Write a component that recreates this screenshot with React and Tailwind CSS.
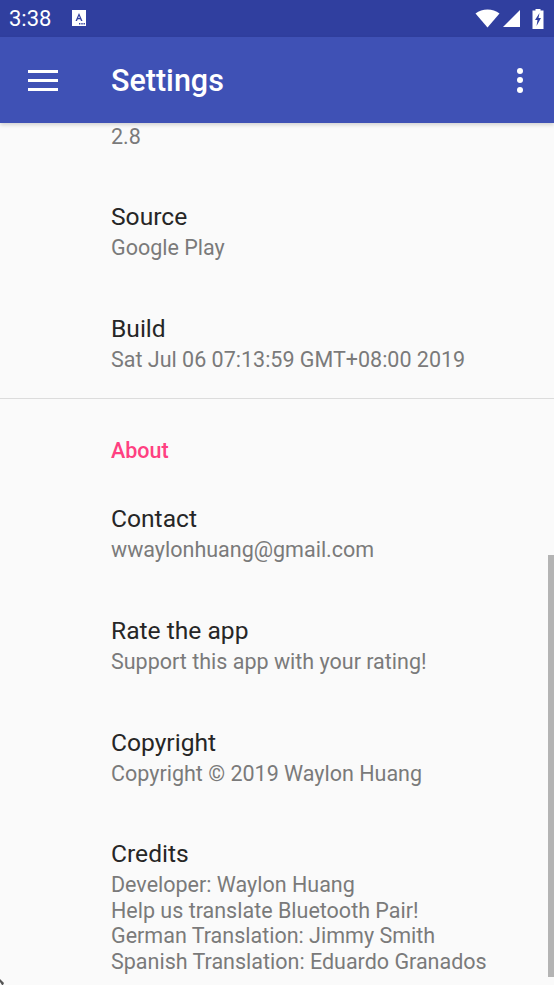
function Pref({ title, children, className = "" }) {
  return (
    <div className={"pl-[111px] " + className}>
      <div className="text-[24.6px] leading-[30px] text-[#262626]">{title}</div>
      <div className="mt-[3px] text-[21.5px] leading-[25.5px] text-[#7a7a7a] whitespace-pre-line">{children}</div>
    </div>
  )
}

export default function App() {
  return (
    <div className="relative w-[554px] h-[985px] overflow-hidden bg-[#fafafa] font-['Roboto',sans-serif]">
      {/* status bar */}
      <div className="h-[37px] bg-[#303f9f] flex items-center pl-[9px] pr-[10px] text-white">
        <span className="text-[22px] leading-none">3:38</span>
        <svg className="ml-[21px] mt-[-1px]" width="15" height="16" viewBox="0 0 15 16">
          <path d="M0 0H14V16H0Z" fill="#fff" />
          <path d="M7 3L10.5 11H9L8.3 9.3H5.7L5 11H3.5ZM7 5.8L6.2 8H7.8Z" fill="#303f9f" />
          <path d="M7 13h1.4v1.4H7zM9.3 13h1.4v1.4H9.3zM11.5 13h1.4v1.4h-1.4z" fill="#303f9f" />
        </svg>
        <div className="ml-auto flex items-center">
          <svg width="25" height="19" viewBox="0 0 25 19">
            <path d="M12.5 18.5L0.5 4.5C4 1.7 8 0.5 12.5 0.5C17 0.5 21 1.7 24.5 4.5Z" fill="#fff" />
          </svg>
          <svg className="ml-[3px]" width="17" height="17" viewBox="0 0 17 17">
            <path d="M17 0V17H0Z" fill="#fff" />
          </svg>
          <svg className="ml-[12px]" width="12" height="20" viewBox="0 0 12 20">
            <path d="M3.5 0H8.5V1.5H11.5V20H0.5V1.5H3.5Z" fill="#fff" />
            <path d="M7.5 4L3 11H5.5L4.5 17L9 9H6.5Z" fill="#303f9f" />
          </svg>
        </div>
      </div>

      {/* app bar */}
      <div className="relative z-10 h-[86px] bg-[#3f51b5] flex items-center shadow-[0_2px_4px_rgba(0,0,0,0.16)] text-white">
        <div className="w-[111px] pl-[28px]">
          <div className="w-[30px] flex flex-col gap-[6px]">
            <div className="h-[3px] bg-white" />
            <div className="h-[3px] bg-white" />
            <div className="h-[3px] bg-white" />
          </div>
        </div>
        <div className="text-[30.5px] font-medium leading-none mt-[2px]">Settings</div>
        <div className="ml-auto mr-[31px] flex flex-col gap-[3.5px]">
          <div className="w-[6px] h-[6px] rounded-full bg-white" />
          <div className="w-[6px] h-[6px] rounded-full bg-white" />
          <div className="w-[6px] h-[6px] rounded-full bg-white" />
        </div>
      </div>

      {/* list */}
      <div className="pl-[111px] pt-[1px] text-[21.5px] leading-[25.5px] text-[#7a7a7a]">2.8</div>
      <Pref title="Source" className="mt-[52.5px]">Google Play</Pref>
      <Pref title="Build" className="mt-[53px]">Sat Jul 06 07:13:59 GMT+08:00 2019</Pref>
      <div className="h-[1px] bg-[#dcdcdc] mt-[26px]" />
      <div className="pl-[111px] pt-[39px] text-[21.5px] leading-[25px] font-medium text-[#ff4081]">About</div>
      <Pref title="Contact" className="mt-[40.5px]">wwaylonhuang@gmail.com</Pref>
      <Pref title="Rate the app" className="mt-[54px]">Support this app with your rating!</Pref>
      <Pref title="Copyright" className="mt-[53px]">Copyright © 2019 Waylon Huang</Pref>
      <Pref title="Credits" className="mt-[53px]">{"Developer: Waylon Huang\nHelp us translate Bluetooth Pair!\nGerman Translation: Jimmy Smith\nSpanish Translation: Eduardo Granados"}</Pref>

      {/* scrollbar */}
      <div className="absolute right-0 top-[555px] w-[6px] h-[422px] bg-[#b4b4b4]" />

      {/* cursor tip */}
      <svg className="absolute left-0 bottom-0" width="5" height="6" viewBox="0 0 5 6">
        <path d="M0 0L4 4L3 6H2L0 3Z" fill="#555" />
      </svg>
    </div>
  )
}
